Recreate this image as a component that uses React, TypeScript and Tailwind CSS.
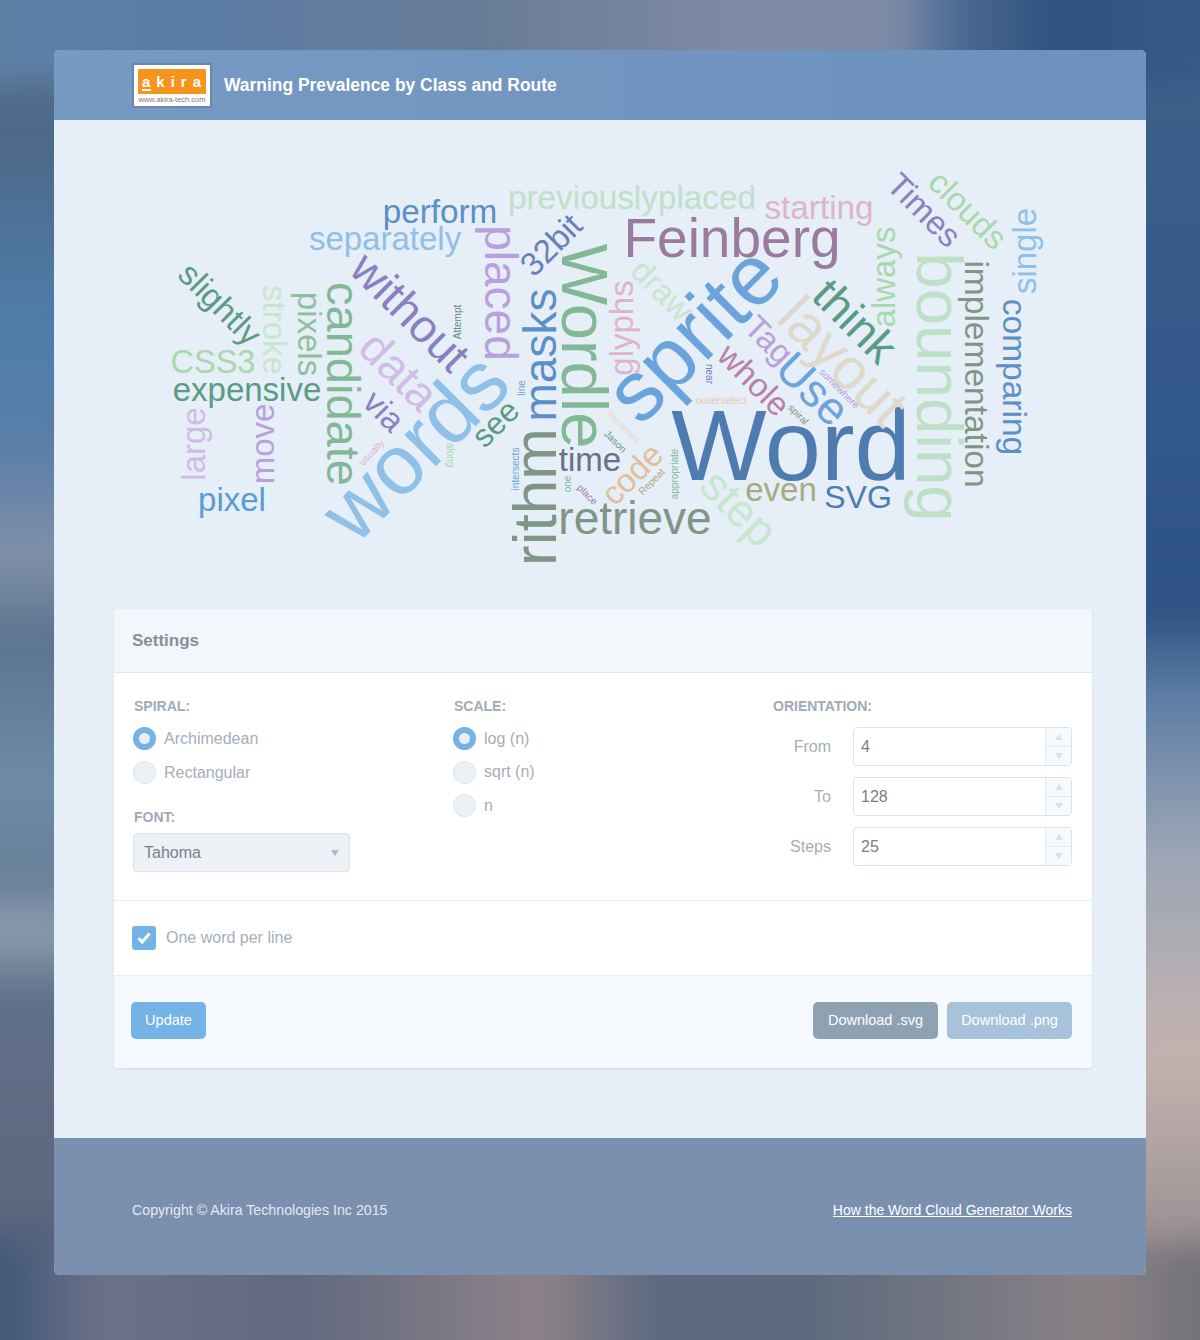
import React from 'react';

// blurred photo behind the card: only the margins show, so four soft strips are enough
const backdrop =
  "bg-[#566c8c] bg-no-repeat bg-[image:linear-gradient(90deg,#5f80a5_40px,#5a7ca3_240px,#6a7d98_540px,#808ba5_790px,#7b8aa5_940px,#4e6d96_990px,#30527f_1090px,#38588a_1240px),linear-gradient(90deg,#3f5878_40px,#6c7188_140px,#62697f_340px,#8c8388_580px,#5f6a80_690px,#5c6a7e_840px,#8a8285_1140px,#737278_1240px),linear-gradient(180deg,#5a7a9f_40px,#4c6886_170px,#4f7caa_360px,#5a7fa8_490px,#8090a8_596px,#5b7490_680px,#6d8ba8_820px,#688098_920px,#8c9bb0_970px,#5f6f88_1040px,#5f6880_1240px,#3f5578_1350px),linear-gradient(180deg,#3f6088_40px,#33588a_440px,#2d5283_650px,#5f7fa5_740px,#9aa5b5_890px,#b9b0b2_1040px,#c2b2ae_1100px,#a59a9a_1240px,#6e6e7e_1380px)] bg-[size:100%_120px,100%_135px,124px_100%,124px_100%] bg-[position:0_0,0_100%,0_0,100%_0]";

type W = { t: string; x: number; y: number; s: number; r: number; c: string };

const words: W[] = [
  { t: 'Word', x: 791, y: 480, s: 101, r: 0, c: '#4f7cb0' },
  { t: 'Feinberg', x: 732, y: 257, s: 55, r: 0, c: '#9a7a9e' },
  { t: 'previouslyplaced', x: 632, y: 209, s: 33.3, r: 0, c: '#bfe0c8' },
  { t: 'starting', x: 819, y: 219, s: 33.3, r: 0, c: '#dfb3d0' },
  { t: 'perform', x: 440, y: 223, s: 33.3, r: 0, c: '#5b8fc7' },
  { t: 'separately', x: 385, y: 250, s: 33, r: 0, c: '#8fc0e8' },
  { t: 'CSS3', x: 213, y: 373, s: 32.5, r: 0, c: '#a8d8ab' },
  { t: 'expensive', x: 247, y: 401, s: 33, r: 0, c: '#5b9a85' },
  { t: 'pixel', x: 232, y: 511, s: 33, r: 0, c: '#5b9bd5' },
  { t: 'time', x: 590, y: 471, s: 33, r: 0, c: '#6a6f8a' },
  { t: 'retrieve', x: 635, y: 534, s: 46, r: 0, c: '#7f9585' },
  { t: 'even', x: 781, y: 501, s: 33, r: 0, c: '#a9a982' },
  { t: 'SVG', x: 858, y: 508, s: 32, r: 0, c: '#4f7cb0' },
  { t: 'ouserselect', x: 721, y: 404, s: 10, r: 0, c: '#e8c8b0' },

  { t: 'Wordle', x: 562, y: 346, s: 65, r: 90, c: '#82b896' },
  { t: 'rithm', x: 556, y: 497, s: 62, r: -90, c: '#7f9585' },
  { t: 'masks', x: 556, y: 355, s: 46, r: -90, c: '#5b8fc7' },
  { t: 'bounding', x: 917, y: 387, s: 65.5, r: 90, c: '#bfe0c8' },
  { t: 'implementation', x: 965, y: 374, s: 33.5, r: 90, c: '#7f9585' },
  { t: 'comparing', x: 1003, y: 377, s: 33.5, r: 90, c: '#5b8fc7' },
  { t: 'single', x: 1036, y: 251, s: 33, r: -90, c: '#8fc0e8' },
  { t: 'always', x: 895, y: 277, s: 33, r: -90, c: '#a8d8ab' },
  { t: 'placed', x: 485, y: 293, s: 46, r: 90, c: '#b8a0dc' },
  { t: 'candidate', x: 327, y: 384, s: 47, r: 90, c: '#82b896' },
  { t: 'pixels', x: 298, y: 334, s: 33, r: 90, c: '#8fbfa0' },
  { t: 'stroke', x: 263, y: 330, s: 33, r: 90, c: '#c8e6cf' },
  { t: 'large', x: 205, y: 444, s: 33, r: -90, c: '#d0bce6' },
  { t: 'move', x: 274, y: 444, s: 33, r: -90, c: '#b8a0dc' },
  { t: 'glyphs', x: 633, y: 328, s: 33, r: -90, c: '#dfb3d0' },

  { t: 'words', x: 435, y: 467, s: 84, r: -45, c: '#8fc0e8' },
  { t: 'sprite', x: 714, y: 354, s: 85, r: -45, c: '#6ba3dc' },
  { t: 'layout', x: 829, y: 375, s: 58, r: 45, c: '#dfd8cd' },
  { t: 'think', x: 844, y: 332, s: 46, r: 45, c: '#5b9a85' },
  { t: 'slightly', x: 212, y: 312, s: 33, r: 45, c: '#5b9a85' },
  { t: 'without', x: 399, y: 323, s: 46, r: 45, c: '#8a80c0' },
  { t: '32bit', x: 559, y: 253, s: 33, r: -45, c: '#6a7fb8' },
  { t: 'clouds', x: 960, y: 218, s: 33, r: 45, c: '#a8d8ab' },
  { t: 'Times', x: 916, y: 218, s: 33, r: 45, c: '#8a80c0' },
  { t: 'draw', x: 654, y: 298, s: 33, r: 45, c: '#c8e6cf' },
  { t: 'whole', x: 746, y: 388, s: 33, r: 45, c: '#b87fa8' },
  { t: 'Tag', x: 761, y: 348, s: 33, r: 45, c: '#b8a0dc' },
  { t: 'Use', x: 802, y: 400, s: 46, r: 45, c: '#6ba3dc' },
  { t: 'code', x: 640, y: 482, s: 33, r: -45, c: '#dfc09a' },
  { t: 'step', x: 728, y: 519, s: 46, r: 45, c: '#c8e6cf' },
  { t: 'data', x: 388, y: 382, s: 46, r: 45, c: '#d0bce6' },
  { t: 'via', x: 376, y: 419, s: 33, r: 45, c: '#8a80c0' },
  { t: 'see', x: 503, y: 431, s: 32, r: -45, c: '#5b9a85' },

  { t: 'Attempt', x: 461, y: 322, s: 10, r: -90, c: '#6a8a80' },
  { t: 'line', x: 525, y: 388, s: 10, r: -90, c: '#6ba3dc' },
  { t: 'usually', x: 374, y: 455, s: 10, r: -45, c: '#dfb3d0' },
  { t: 'along', x: 447, y: 455, s: 10, r: 90, c: '#a8d8ab' },
  { t: 'intersects', x: 519, y: 469, s: 10, r: -90, c: '#6ba3dc' },
  { t: 'one', x: 571, y: 484, s: 10, r: -90, c: '#82b896' },
  { t: 'place', x: 585, y: 497, s: 10, r: 45, c: '#9a7a9e' },
  { t: 'Jason', x: 613, y: 444, s: 10, r: 45, c: '#5b9a85' },
  { t: 'important', x: 621, y: 429, s: 10, r: 45, c: '#e6d9cc' },
  { t: 'Repeat', x: 654, y: 484, s: 10, r: -45, c: '#a9a982' },
  { t: 'appropriate', x: 678, y: 474, s: 10, r: -90, c: '#82b896' },
  { t: 'near', x: 706, y: 374, s: 10, r: 90, c: '#6a7fb8' },
  { t: 'spiral', x: 796, y: 417, s: 10, r: 45, c: '#7f9585' },
  { t: 'somewhere', x: 837, y: 391, s: 10, r: 45, c: '#b8a0dc' },
];

function Radio({ label, on }: { label: string; on?: boolean }) {
  return (
    <div className="flex items-center gap-[8px] h-[23px] -ml-[1px]">
      {on ? (
        <span className="w-[23px] h-[23px] rounded-full bg-[#74b3e5] flex items-center justify-center">
          <span className="w-[11px] h-[11px] rounded-full bg-[#e8eef4]" />
        </span>
      ) : (
        <span className="w-[23px] h-[23px] rounded-full bg-[#edf1f5] border border-[#dbe3eb]" />
      )}
      <span className="text-base text-[#a5aeba]">{label}</span>
    </div>
  );
}

function NumberField({ label, value }: { label: string; value: string }) {
  return (
    <div className="flex items-center gap-[22px]">
      <label className="w-[58px] text-right text-base text-[#a5aeba]">{label}</label>
      <div className="flex w-[219px] h-[39px] rounded-[4px] border border-[#d8e2ed] bg-white overflow-hidden">
        <input
          readOnly
          value={value}
          className="flex-1 min-w-0 pl-[7px] text-base text-[#75808c] outline-none"
        />
        <div className="w-[26px] flex flex-col border-l border-[#e3eaf2] bg-[#f7fafd]">
          <div className="flex-1 flex items-center justify-center border-b border-[#e3eaf2]">
            <span className="w-0 h-0 border-x-[4px] border-x-transparent border-b-[6px] border-b-[#d6e2ec]" />
          </div>
          <div className="flex-1 flex items-center justify-center">
            <span className="w-0 h-0 border-x-[4px] border-x-transparent border-t-[6px] border-t-[#d6e2ec]" />
          </div>
        </div>
      </div>
    </div>
  );
}

function Heading({ children }: { children: React.ReactNode }) {
  return <h4 className="text-sm font-bold leading-[20px] text-[#a0abb8]">{children}</h4>;
}

export default function App() {
  return (
    <div className="relative overflow-hidden min-h-[1340px] pt-[50px] px-[54px] font-['Liberation_Sans',Arial,sans-serif]">
      <div className={`absolute -inset-[40px] blur-[14px] ${backdrop}`} />
      <div className="relative rounded-[6px] overflow-hidden bg-[#e6eef7]">
        {/* Header */}
        <div className="h-[70px] bg-linear-to-r from-[#779ac3] to-[#6c91bd] pl-[78px] flex items-center gap-[12px]">
          <div className="w-[80px] h-[45px] bg-white border-2 border-[#6a87ab] pt-[4px] px-[4px] flex flex-col items-center">
            <div className="w-full h-[25px] bg-[#f7941d] flex items-center justify-center pl-[5px] text-white text-[15px] font-bold leading-none tracking-[6px]">
              <span className="relative">
                a<span className="absolute left-0 top-[15px] w-[9px] h-[2px] bg-white" />
              </span>
              kira
            </div>
            <div className="text-[7.5px] leading-[11px] text-[#777]">www.akira-tech.com</div>
          </div>
          <h1 className="text-[17.45px] font-bold text-white">Warning Prevalence by Class and Route</h1>
        </div>

        {/* Word cloud */}
        <div className="pt-[30px] px-[60px]">
          <svg width="972" height="459" viewBox="114 150 972 459" className="block">
            {words.map((w) => (
              <text
                key={w.t}
                textAnchor="middle"
                fontSize={w.s}
                fill={w.c}
                transform={`translate(${w.x} ${w.y}) rotate(${w.r})`}
              >
                {w.t}
              </text>
            ))}
            <circle cx="1020" cy="544" r="1" fill="#d5e0ea" />
          </svg>

          {/* Settings */}
          <div className="w-[978px] rounded-[4px] bg-white overflow-hidden shadow-[0_1px_2px_#cfdcea]">
            <div className="h-[64px] flex items-center pl-[18px] bg-[#f3f7fb] border-b border-[#e1e8f0] text-[17px] font-bold text-[#83919e]">
              Settings
            </div>
            <div className="h-[228px] pt-[23px] pl-[20px] pr-[20px] grid grid-cols-[320px_319px_1fr] border-b border-[#e8eef5]">
              <div>
                <Heading>SPIRAL:</Heading>
                <div className="mt-[11px] flex flex-col gap-[11px]">
                  <Radio label="Archimedean" on />
                  <Radio label="Rectangular" />
                </div>
                <div className="mt-[23px]">
                  <Heading>FONT:</Heading>
                  <div className="mt-[6px] -ml-[1px] w-[217px] h-[39px] rounded-[4px] border border-[#dde3ea] bg-[#edf0f4] pl-[10px] pr-[10px] flex items-center justify-between">
                    <span className="text-base text-[#77818d]">Tahoma</span>
                    <span className="w-0 h-0 border-x-[4px] border-x-transparent border-t-[6px] border-t-[#aeb8c2]" />
                  </div>
                </div>
              </div>
              <div>
                <Heading>SCALE:</Heading>
                <div className="mt-[11px] flex flex-col gap-[10.7px]">
                  <Radio label="log (n)" on />
                  <Radio label="sqrt (n)" />
                  <Radio label="n" />
                </div>
              </div>
              <div>
                <Heading>ORIENTATION:</Heading>
                <div className="mt-[11px] flex flex-col gap-[11px]">
                  <NumberField label="From" value="4" />
                  <NumberField label="To" value="128" />
                  <NumberField label="Steps" value="25" />
                </div>
              </div>
            </div>
            <div className="h-[75px] pl-[18px] flex items-center gap-[10px] border-b border-[#e8eef5]">
              <span className="w-[24px] h-[24px] rounded-[3px] bg-[#74b3e5] flex items-center justify-center">
                <svg width="14" height="12" viewBox="0 0 14 12" fill="none">
                  <path d="M1.5 6.2 L5.2 10 L12.5 1.6" stroke="white" strokeWidth="3" />
                </svg>
              </span>
              <span className="text-base text-[#a5aeba]">One word per line</span>
            </div>
            <div className="h-[92px] bg-[#f6f9fd] pl-[17px] pr-[20px] pt-[26px] flex items-start justify-between">
              <button className="w-[75px] h-[37px] rounded-[5px] bg-[#74b3e5] text-[14.5px] font-medium text-white">Update</button>
              <div className="flex gap-[9px]">
                <button className="w-[125px] h-[37px] rounded-[5px] bg-[#8ea2b3] text-[14.5px] text-white">Download .svg</button>
                <button className="w-[125px] h-[37px] rounded-[5px] bg-[#a7c3db] text-[14.5px] text-white">Download .png</button>
              </div>
            </div>
          </div>
          <div className="h-[70px]" />
        </div>

        {/* Footer */}
        <div className="h-[137px] bg-[#7b8fae] pl-[78px] pr-[74px] flex items-center justify-between pt-[6px]">
          <span className="text-[14.2px] leading-[20px] text-[#e3e9f2]">Copyright © Akira Technologies Inc 2015</span>
          <a className="text-sm leading-[20px] text-white underline">How the Word Cloud Generator Works</a>
        </div>
      </div>
    </div>
  );
}
